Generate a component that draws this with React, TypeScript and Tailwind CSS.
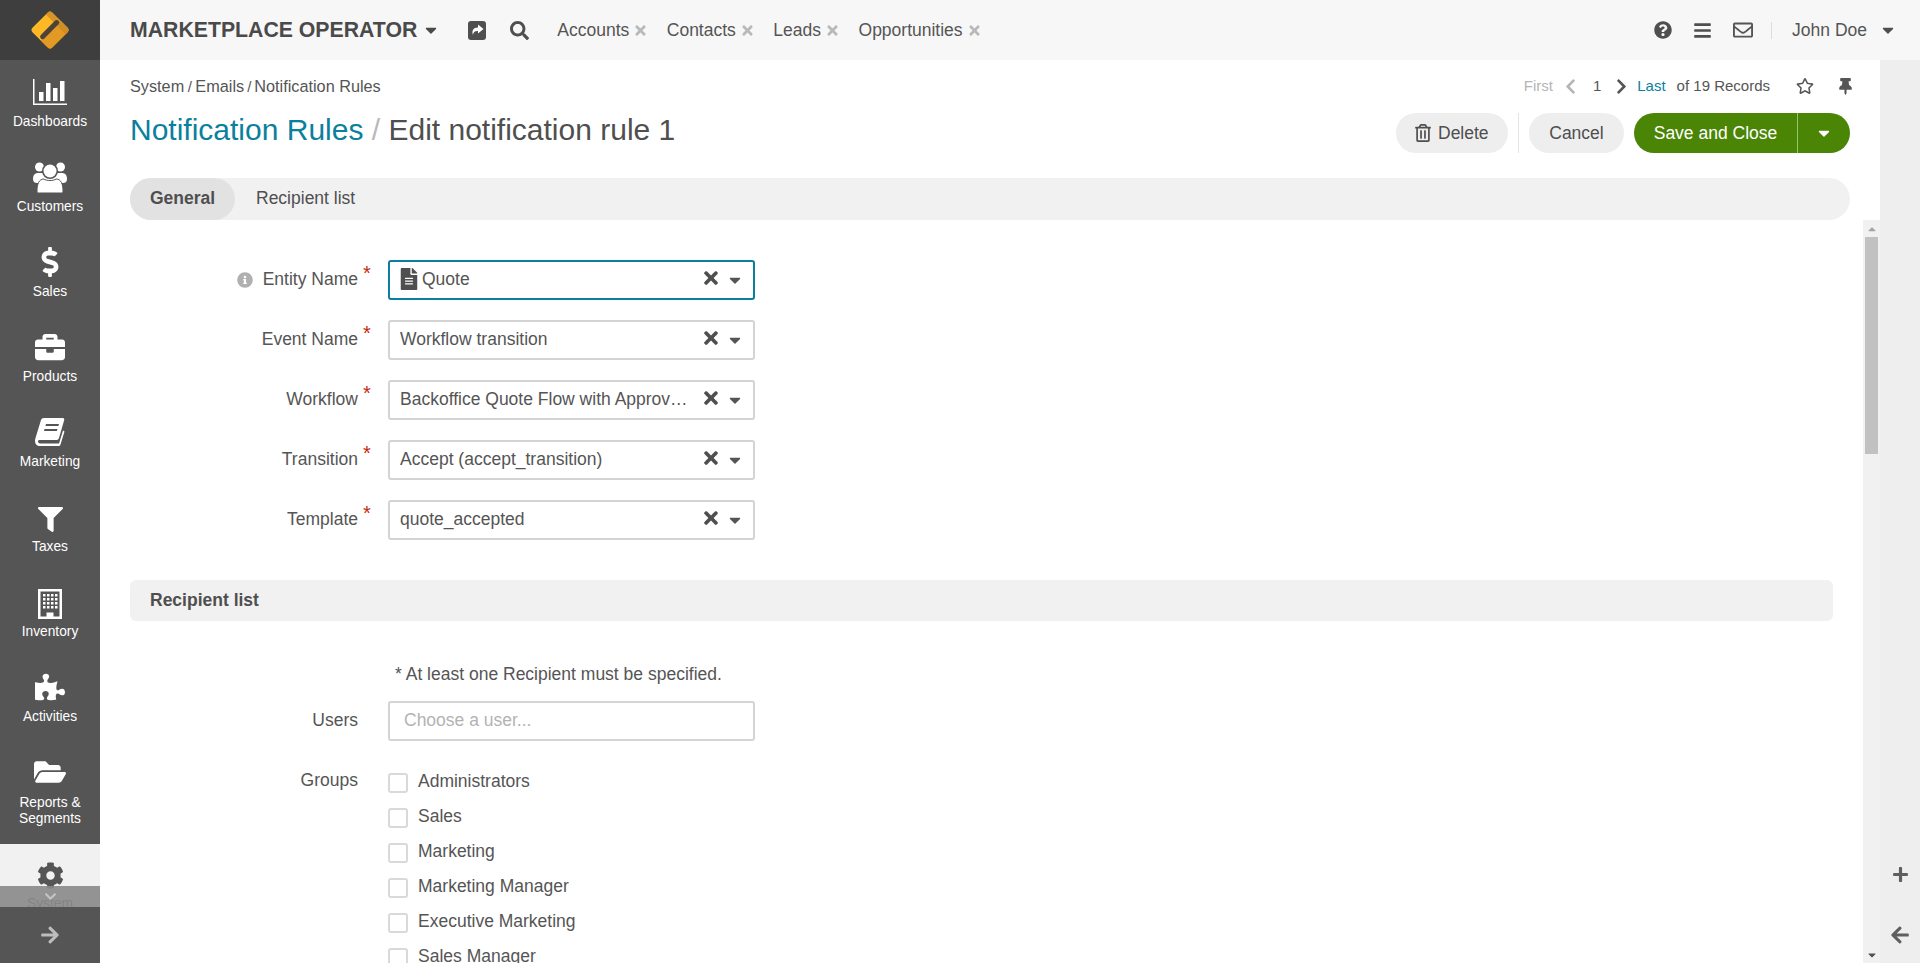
import React from 'react';
import {
  FaArrowLeft, FaArrowRight, FaBars, FaBriefcase, FaCaretDown, FaCaretUp, FaChevronDown, FaChevronLeft, FaChevronRight,
  FaCog, FaDollarSign, FaFileAlt, FaFilter, FaFolderOpen, FaInfoCircle, FaPlus, FaPuzzlePiece, FaQuestionCircle,
  FaRegEnvelope, FaRegStar, FaRegTrashAlt, FaSearch, FaThumbtack, FaTimes,
} from 'react-icons/fa';

const Logo = () => (
  <svg width="60" height="60" viewBox="0 0 60 60">
    <g transform="rotate(-45 30 30)">
      <rect x="16" y="16" width="28" height="28" rx="3.5" fill="#fdb827" />
      <path d="M16 31h28v9.500a3.500 3.500 0 0 1-3.500 3.500h-21a3.500 3.500 0 0 1-3.500-3.500z" fill="#e39a25" />
      <path d="M38 16h2.500a3.500 3.500 0 0 1 3.500 3.500v21a3.500 3.500 0 0 1-3.500 3.500H38z" fill="#c98a26" opacity="0.75" />
      <rect x="17.500" y="27" width="25" height="5" rx="2.500" fill="#4b4239" />
    </g>
  </svg>
);

const BarChartIcon = () => (
  <svg width="36" height="27" viewBox="0 0 36 27" fill="#fff">
    <path d="M1 0h1.500v24.500H35V26H1z" />
    <rect x="7" y="13" width="4.500" height="9" />
    <rect x="14" y="4" width="4.500" height="18" />
    <rect x="21" y="9" width="4.500" height="13" />
    <rect x="28" y="2" width="4.500" height="20" />
  </svg>
);

const UsersIcon = () => (
  <svg width="34" height="31" viewBox="0 0 34 31" fill="#fff">
    <circle cx="6.500" cy="5" r="4.500" />
    <circle cx="27.500" cy="5" r="4.500" />
    <path d="M0 17c0-4 2-6 5-6h24c3 0 5 2 5 6 0 3-2 4-4 4H4c-2 0-4-1-4-4z" />
    <circle cx="17" cy="9" r="8" fill="#555" />
    <circle cx="17" cy="9" r="6.500" />
    <path d="M5.500 31c-1 0-1.500-1-1.500-2 0-7 2-12 7-12 2 2 10 2 12 0 5 0 7 5 7 12 0 1-.5 2-1.500 2z" stroke="#555" strokeWidth="1" />
  </svg>
);

const BookIcon = () => (
  <svg width="30" height="28" viewBox="0 0 30 28" fill="#fff">
    <path d="M9 0h19c1 0 1.500 1 1.200 2L24 20c-.5 1.500-1.500 2-3 2H5c-1.500 0-2 .5-2 1.500S4 25.500 5.500 25.500H24l4-13 1.500 1-4 13c-.3 1-1 1.500-2 1.500H5c-3 0-5-2-5-5 0-1 .2-2 .5-3L6 2c.4-1.200 1.500-2 3-2z" />
    <path d="M11 6h13l-.6 2H10.400zM9.500 11h13l-.6 2H9z" fill="#555" />
  </svg>
);

const BuildingIcon = () => (
  <svg width="24" height="30" viewBox="0 0 24 30" fill="#fff">
    <path fillRule="evenodd" d="M0 0h24v30H0zM2.500 2.500v25h6v-4h7v4h6v-25z" />
    <path d="M5 5h2.500v2.500H5zM9 5h2.500v2.500H9zM13 5h2.500v2.500H13zM17 5h2.500v2.500H17zM5 9h2.500v2.500H5zM9 9h2.500v2.500H9zM13 9h2.500v2.500H13zM17 9h2.500v2.500H17zM5 13h2.500v2.500H5zM9 13h2.500v2.500H9zM13 13h2.500v2.500H13zM17 13h2.500v2.500H17zM5 17h2.500v2.500H5zM9 17h2.500v2.500H9zM13 17h2.500v2.500H13zM17 17h2.500v2.500H17z" />
  </svg>
);

const ShareIcon = () => (
  <svg width="18" height="19" viewBox="0 0 18 19">
    <rect x="0" y="0" width="18" height="19" rx="3" fill="#4f4f4f" />
    <path d="M10 3.500l5.500 4.500-5.500 4.500V10c-2.800 0-4.500.5-5 4-1.500-4 .2-7.500 5-7.500z" fill="#fff" />
  </svg>
);

const navItems = [
  { label: 'Dashboards', icon: <BarChartIcon /> },
  { label: 'Customers', icon: <UsersIcon /> },
  { label: 'Sales', icon: <FaDollarSign className="text-[30px] text-white" /> },
  { label: 'Products', icon: <FaBriefcase className="text-[30px] text-white" /> },
  { label: 'Marketing', icon: <BookIcon /> },
  { label: 'Taxes', icon: <FaFilter className="mt-[4px] text-[25px] text-white" /> },
  { label: 'Inventory', icon: <div className="mt-[4px] flex"><BuildingIcon /></div> },
  { label: 'Activities', icon: <FaPuzzlePiece className="text-[30px] text-white" /> },
];

const Sidebar = () => (
  <aside className="flex h-full w-[100px] shrink-0 flex-col bg-[#555555]">
    <div className="flex h-[60px] items-center justify-center bg-[#3e3e3e]">
      <Logo />
    </div>
    <div className="relative flex-1 overflow-hidden">
      {navItems.map((item) => (
        <div key={item.label} className="flex h-[85px] flex-col items-center pt-[16px]">
          <div className="flex h-[32px] items-center justify-center">{item.icon}</div>
          <div className="mt-[5.5px] text-[13.75px] leading-[16px] text-white">{item.label}</div>
        </div>
      ))}
      <div className="flex h-[104px] flex-col items-center pt-[16px]">
        <div className="flex h-[32px] items-center justify-center">
          <FaFolderOpen className="text-[32px] text-white" />
        </div>
        <div className="mt-[7px] text-center text-[13.75px] leading-[16px] text-white">
          Reports &amp;
          <br />
          Segments
        </div>
      </div>
      <div className="flex h-[85px] flex-col items-center bg-[#f1f1f1] pt-[15px]">
        <div className="flex h-[32px] items-center justify-center">
          <FaCog className="text-[27px] text-[#555555]" />
        </div>
        <div className="mt-[5px] text-[13.75px] leading-[16px] text-[#555555]">System</div>
      </div>
      <div className="absolute bottom-0 left-0 flex h-[21px] w-full items-center justify-center bg-[#888888]/90">
        <FaChevronDown className="text-[13px] text-[#c4c4c4]" />
      </div>
    </div>
    <div className="flex h-[56px] items-center justify-center">
      <FaArrowRight className="text-[20px] text-[#bdbdbd]" />
    </div>
  </aside>
);

const TopTab = ({ label }: { label: string }) => (
  <div className="mr-[18.5px] flex items-center gap-[4px]">
    <span>{label}</span>
    <FaTimes className="text-[15px] text-[#b9b9b9]" />
  </div>
);

const TopBar = () => (
  <header className="flex h-[60px] shrink-0 items-center bg-[#f7f7f7] pl-[30px] pr-[23px] text-[17.5px] text-[#555555]">
    <span className="mt-[2px] text-[21.25px] font-bold text-[#4a4a4a]">MARKETPLACE OPERATOR</span>
    <FaCaretDown className="ml-[5px] text-[18px] text-[#4a4a4a]" />
    <div className="ml-[28px]">
      <ShareIcon />
    </div>
    <FaSearch className="ml-[24px] text-[19px] text-[#4f4f4f]" />
    <div className="ml-[28px] flex items-center">
      <TopTab label="Accounts" />
      <TopTab label="Contacts" />
      <TopTab label="Leads" />
      <TopTab label="Opportunities" />
    </div>
    <div className="ml-auto flex items-center">
      <FaQuestionCircle className="text-[18px] text-[#4f4f4f]" />
      <FaBars className="ml-[21px] text-[19px] text-[#4f4f4f]" />
      <FaRegEnvelope className="ml-[21px] text-[20px] text-[#555555]" />
      <div className="ml-[18px] h-[17px] w-px bg-[#dddddd]" />
      <span className="ml-[20px]">John Doe</span>
      <FaCaretDown className="ml-[12px] text-[18px] text-[#4f4f4f]" />
    </div>
  </header>
);

const PageHeader = () => (
  <div className="shrink-0 px-[30px] pt-[12px]">
    <div className="flex h-[28px] items-center justify-between">
      <div className="text-[16.250px] text-[#555555]">
        System<span className="mx-[3.5px] text-[15px]">/</span>Emails<span className="mx-[3px] text-[15px]">/</span>Notification Rules
      </div>
      <div className="-mr-[4px] flex items-center text-[15px] text-[#555555]">
        <span className="text-[#b5b5b5]">First</span>
        <FaChevronLeft className="ml-[9.5px] text-[17px] text-[#b5b5b5]" />
        <span className="ml-[13.5px]">1</span>
        <FaChevronRight className="ml-[12px] text-[17px] text-[#555555]" />
        <span className="ml-[7px] text-[#0b7f9e]">Last</span>
        <span className="ml-[11px]">of 19 Records</span>
        <FaRegStar className="ml-[26px] text-[18px] text-[#555555]" />
        <FaThumbtack className="ml-[23px] text-[17px] text-[#555555]" />
      </div>
    </div>
    <div className="mt-[13px] flex h-[40px] items-center justify-between">
      <h1 className="-mt-[6px] text-[30px] font-normal leading-[40px] text-[#4f4f4f]">
        <span className="text-[#0b7f9e]">Notification Rules</span>
        <span className="text-[#b9b9b9]"> / </span>
        Edit notification rule 1
      </h1>
      <div className="flex items-center text-[17.5px]">
        <button className="flex h-[40px] w-[112px] items-center gap-[6px] rounded-[20px] bg-[#eeeeee] pl-[18px] text-[#4f4f4f]">
          <FaRegTrashAlt className="text-[18px]" />
          Delete
        </button>
        <div className="mx-[10px] h-[40px] w-px bg-[#e4e4e4]" />
        <button className="h-[40px] w-[95px] rounded-[20px] bg-[#eeeeee] text-[#4f4f4f]">Cancel</button>
        <div className="ml-[10px] flex h-[40px] overflow-hidden rounded-[20px] bg-[#4a8505] text-white">
          <button className="w-[163px]">Save and Close</button>
          <div className="w-px bg-[#9cc26c]" />
          <button className="flex w-[52px] items-center justify-center">
            <FaCaretDown className="text-[18px]" />
          </button>
        </div>
      </div>
    </div>
    <div className="mt-[25px] flex h-[42px] items-center rounded-[21px] bg-[#f1f1f1] text-[17.5px] leading-[20px] text-[#4f4f4f]">
      <div className="flex h-full w-[105px] items-center justify-center rounded-[21px] bg-[#e2e2e2] pb-[2px] font-bold">General</div>
      <div className="ml-[21px] pb-[2px]">Recipient list</div>
    </div>
  </div>
);

const SelectRow = ({ label, value, focused, info, doc }: { label: string; value: string; focused?: boolean; info?: boolean; doc?: boolean }) => (
  <div className="mb-[20px] flex h-[40px] items-center">
    <div className="flex w-[228px] items-center justify-end">
      {info && <FaInfoCircle className="mr-[10px] text-[16px] text-[#b0b0b0]" />}
      <span className="-mt-[2px]">{label}</span>
    </div>
    <div className="-mt-[14px] w-[30px] pl-[5px] text-[20px] leading-[20px] text-[#c4290c]">*</div>
    <div
      className={
        focused
          ? 'flex h-[40px] w-[367px] items-center rounded-[3px] border-2 border-[#0b7f9e] pl-[10px]'
          : 'flex h-[40px] w-[367px] items-center rounded-[3px] border-2 border-[#d4d4d4] pl-[10px]'
      }
    >
      {doc && <FaFileAlt className="-ml-[2px] -mt-[2px] mr-[2px] text-[22px] text-[#4f4f4f]" />}
      <span className="-mt-[2px] max-w-[288px] truncate">{value}</span>
      <FaTimes className="-mt-[4px] ml-auto text-[20px] text-[#4f4f4f]" />
      <FaCaretDown className="ml-[5px] mr-[9px] text-[18px] text-[#555555]" />
    </div>
  </div>
);

const groups = ['Administrators', 'Sales', 'Marketing', 'Marketing Manager', 'Executive Marketing', 'Sales Manager', 'Customer Support'];

const FormBody = () => (
  <div className="flex-1 overflow-hidden pl-[30px] pr-[30px] pt-[40px] text-[17.5px] text-[#555555]">
    <SelectRow label="Entity Name" value="Quote" focused info doc />
    <SelectRow label="Event Name" value="Workflow transition" />
    <SelectRow label="Workflow" value="Backoffice Quote Flow with Approvals" />
    <SelectRow label="Transition" value="Accept (accept_transition)" />
    <SelectRow label="Template" value="quote_accepted" />
    <div className="mt-[40px] flex h-[41px] items-center rounded-[6px] bg-[#f1f1f1] pl-[20px] font-bold text-[#4f4f4f]">Recipient list</div>
    <div className="ml-[265px] mt-[43px] h-[20px] leading-[20px]">* At least one Recipient must be specified.</div>
    <div className="mt-[17px] flex h-[40px] items-center">
      <div className="-mt-[2px] w-[228px] text-right">Users</div>
      <div className="ml-[30px] flex h-[40px] w-[367px] items-center rounded-[3px] border-2 border-[#d4d4d4] pb-[2px] pl-[14px] text-[#b3b3b3]">Choose a user...</div>
    </div>
    <div className="mt-[32px] flex">
      <div className="-mt-[2px] w-[228px] text-right leading-[18px]">Groups</div>
      <div className="ml-[30px] flex flex-col">
        {groups.map((g) => (
          <div key={g} className="flex h-[35px] items-start">
            <div className="h-[20px] w-[20px] rounded-[3px] border-2 border-[#d9d9d9]" />
            <span className="-mt-[1px] ml-[10px] leading-[18px]">{g}</span>
          </div>
        ))}
      </div>
    </div>
  </div>
);

const ScrollBar = () => (
  <div className="relative flex w-[17px] shrink-0 flex-col items-center bg-[#f1f1f1]">
    <div className="flex h-[17px] items-center justify-center">
      <FaCaretUp className="text-[12px] text-[#a3a3a3]" />
    </div>
    <div className="h-[217px] w-[13px] bg-[#c1c1c1]" />
    <div className="mt-auto flex h-[17px] items-center justify-center">
      <FaCaretDown className="text-[12px] text-[#505050]" />
    </div>
  </div>
);

export default function App() {
  return (
    <div className="flex h-[963px] w-[1920px] overflow-hidden bg-white font-['Liberation_Sans',Arial,sans-serif]">
      <Sidebar />
      <main className="flex min-w-0 flex-1 flex-col">
        <TopBar />
        <div className="flex min-h-0 flex-1">
          <div className="flex min-w-0 flex-1 flex-col">
            <PageHeader />
            <div className="flex min-h-0 flex-1">
              <FormBody />
              <ScrollBar />
            </div>
          </div>
          <div className="flex w-[40px] shrink-0 flex-col items-center justify-end bg-[#eeeeee] pb-[18px]">
            <FaPlus className="text-[17px] text-[#5f5f5f]" />
            <FaArrowLeft className="mt-[42px] text-[20px] text-[#5f5f5f]" />
          </div>
        </div>
      </main>
    </div>
  );
}
